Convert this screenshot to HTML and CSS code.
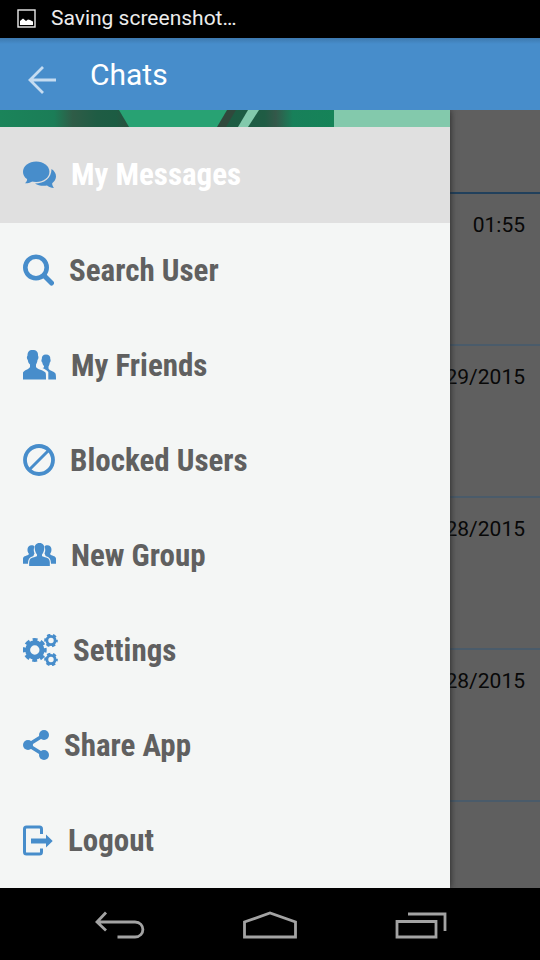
FILE: index.html
```html
<!DOCTYPE html>
<html lang="en">
<head>
<meta charset="utf-8">
<meta name="viewport" content="width=device-width, initial-scale=1">
<title>Chats</title>
<link rel="stylesheet" href="styles.css">
</head>
<body>
<div class="status">
  <svg width="19" height="19" viewBox="0 0 19 19"><rect x="1" y="1" width="17" height="17" fill="none" stroke="#ececec" stroke-width="1.4"/><path d="M3 16V12L6 9.500L9 12L11 10.500L13 11L16 12.500V16Z" fill="#fff"/></svg>
  <span>Saving screenshot…</span>
</div>
<header class="appbar">
  <button class="back" aria-label="Back"><svg width="28" height="28" viewBox="0 0 28 28" fill="none" stroke="#c5dcf1" stroke-width="2.8"><path d="M15 1L2 14L15 27M2 14H28"/></svg></button>
  <h1>Chats</h1>
</header>
<main class="content">
  <section class="chats">
    <div class="chats-head"></div>
    <div class="chat"><time>01:55</time></div>
    <div class="chat"><time>29/2015</time></div>
    <div class="chat"><time>28/2015</time></div>
    <div class="chat"><time>28/2015</time></div>
  </section>
  <nav class="drawer">
    <svg class="cover" viewBox="0 0 450 17" preserveAspectRatio="none">
      <defs>
        <linearGradient id="left"><stop offset="0" stop-color="#1b845a"/><stop offset=".4" stop-color="#1b7d57"/><stop offset=".54" stop-color="#2f5c47"/><stop offset=".72" stop-color="#1f5c44"/><stop offset=".86" stop-color="#1c5c43"/><stop offset="1" stop-color="#34493c"/></linearGradient>
        <linearGradient id="right"><stop offset="0" stop-color="#1c5c43"/><stop offset=".36" stop-color="#1f5c44"/><stop offset=".46" stop-color="#34584a"/><stop offset=".62" stop-color="#18805a"/><stop offset="1" stop-color="#158358"/></linearGradient>
      </defs>
      <path d="M0 0H135V17H0Z" fill="url(#left)"/>
      <path d="M119 0H235V17H129Z" fill="#28a273"/>
      <path d="M227 0H250V17H217Z" fill="#30493c"/>
      <path d="M236 0H334V17H226Z" fill="url(#right)"/>
      <path d="M248 0H259L248 17H238Z" fill="#83c9ac"/>
      <path d="M334 0H450V17H334Z" fill="#83c9ac"/>
    </svg>
    <a class="item active" href="#messages">
      <svg width="33" height="28" viewBox="0 0 33 28"><path d="M28.500 8C31.500 10 33 12.500 33 15.500C33 18 31.500 20.500 29.200 22.200C29 24 30 25.500 31 27C28 27 26 26.200 24 24.600C19 25.300 15 24.500 12 22.500C21 22.500 28.500 17.500 28.500 8Z"/><ellipse cx="13.200" cy="10.700" rx="13.200" ry="10.300"/><path d="M4 16C4.500 19 4 20.500 2 22.300C5.500 22.300 8 21.500 10.500 19.500Z"/></svg>
      <span>My Messages</span></a>
    <a class="item" href="#search">
      <svg width="31" height="32" viewBox="0 0 31 32" fill="none"><circle cx="13" cy="13.500" r="10.700" stroke="#478dcb" stroke-width="4.600"/><path d="M21 21.500L28.500 29" stroke="#478dcb" stroke-width="5" stroke-linecap="round"/></svg>
      <span>Search User</span></a>
    <a class="item" href="#friends">
      <svg width="33" height="30" viewBox="0 0 33 30"><path d="M9.500 0C13.500 0 15.300 2 15 5.500C15.800 7 15.500 9 14.500 10C14.300 12 13.500 13.500 13 14.500V17C14 19.500 20.500 20 22.500 22.500C23 23.500 23 26 23 29.500H0V22.500C1 20 6 19.500 7 17V14.500C5.500 13 5 12 4.800 10C3.800 9 3.500 7 4.500 5.500C4.500 2 6 0 9.500 0Z"/><path d="M23 4.500C26 4.500 27.500 6 27.300 9C28 10 27.500 12 26.800 12.500C26.500 14.500 26 15.500 25.500 16.500V18.500C26.500 21 31 21 32.500 23.500C33 25 33 27 33 29.500H25.300V22C24 20 21.500 19 19.500 18C21 17.500 21 17.500 21 16C20 15 19.500 14 19.300 12.500C18.500 12 18 10 18.800 9C18.800 6 20 4.500 23 4.500Z"/></svg>
      <span>My Friends</span></a>
    <a class="item" href="#blocked">
      <svg width="32" height="32" viewBox="0 0 32 32" fill="none" stroke="#478dcb"><circle cx="16" cy="16" r="14" stroke-width="3.800"/><path d="M6.500 25.500L25.500 6.500" stroke-width="3"/></svg>
      <span>Blocked Users</span></a>
    <a class="item" href="#group">
      <svg width="33" height="24" viewBox="0 0 33 24"><path d="M8.500 2.200C10 2.200 11 2.600 11.500 3.500C10.500 6 10.500 8 11.500 10.500C10.500 12 11 12.500 10 13.200C6 14.500 5.300 16 5 20.700H0V15.500C.5 12.500 4.500 13 6 11C3.500 8 4 2.200 8.500 2.200ZM24.500 2.200C23 2.200 22 2.600 21.500 3.500C22.500 6 22.500 8 21.500 10.500C22.500 12 22 12.500 23 13.200C27 14.500 27.700 16 28 20.700H33V15.500C32.500 12.500 28.500 13 27 11C29.500 8 29 2.200 24.500 2.200Z"/><path d="M16.500 0C20 0 21.700 2.500 21.200 6C20.900 8.500 20 10.200 19 11.500V13C20.500 14.500 26 14.200 26.500 17.500C27 19 26.800 21 26.800 23H6.200C6.200 21 6 19 6.500 17.500C7 14.200 12.500 14.500 14 13V11.500C13 10.200 12.100 8.500 11.800 6C11.300 2.500 13 0 16.500 0Z"/></svg>
      <span>New Group</span></a>
    <a class="item" href="#settings">
      <svg width="35" height="32" viewBox="0 0 35 32" fill="none" stroke="#478dcb"><circle cx="11.800" cy="16" r="7.200" stroke-width="5"/><circle cx="11.800" cy="16" r="10.200" stroke-width="3.400" stroke-dasharray="4.800 3.211" stroke-dashoffset="2.400"/><g stroke-width="2.800"><circle cx="28" cy="6.500" r="4.100"/><circle cx="28" cy="25.500" r="4.100"/></g><g stroke-width="2.600" stroke-dasharray="3.200 2.560" stroke-dashoffset="1.600"><circle cx="28" cy="6.500" r="5.500"/><circle cx="28" cy="25.500" r="5.500"/></g></svg>
      <span>Settings</span></a>
    <a class="item" href="#share">
      <svg width="26" height="30" viewBox="0 0 26 30"><path d="M21 5L5 15L21 25" fill="none" stroke="#478dcb" stroke-width="3.600"/><circle cx="5" cy="15" r="5"/><circle cx="21" cy="5" r="5"/><circle cx="21" cy="25" r="5"/></svg>
      <span>Share App</span></a>
    <a class="item" href="#logout">
      <svg width="30" height="31" viewBox="0 0 30 31"><path d="M18.500 9V4Q18.500 2 16.500 2H3.500Q1.500 2 1.500 4V27Q1.500 29 3.500 29H16.500Q18.500 29 18.500 27V23.500" fill="none" stroke="#478dcb" stroke-width="3"/><path d="M8 13.500H23V9.500L29.700 16L23 22.500V18.500H8Z"/></svg>
      <span>Logout</span></a>
  </nav>
</main>
<footer class="navbar">
  <button aria-label="Back"><svg width="50" height="30" viewBox="0 0 50 30" fill="none" stroke="#a3a3a3" stroke-width="2.800"><path d="M11 1.500L2 11L11 19.500M2 11H40C50.500 11 50.500 26 40 26H22.500"/></svg></button>
  <button aria-label="Home"><svg width="56" height="30" viewBox="0 0 56 30" fill="none" stroke="#a3a3a3" stroke-width="2.800"><path d="M2.500 26V11L28 2L53.500 11V26Z"/></svg></button>
  <button aria-label="Recent apps"><svg width="52" height="30" viewBox="0 0 52 30" fill="none" stroke="#a3a3a3" stroke-width="2.800"><path d="M2 10.500H41V26H2ZM13 3H50V20"/></svg></button>
</footer>
</body>
</html>
```
FILE: styles.css
```css
* {
  box-sizing: border-box;
}

body {
  margin: 0;
  min-height: 100vh;
  display: flex;
  flex-direction: column;
  background: #000;
  font-family: Roboto, "Liberation Sans", sans-serif;
}

button {
  display: flex;
  padding: 0;
  border: 0;
  background: none;
}

.status {
  display: flex;
  align-items: center;
  gap: 15px;
  height: 38px;
  padding: 0 17px 2px;
  color: #ececec;
  font-size: 21px;
}

.appbar {
  display: flex;
  align-items: center;
  gap: 34px;
  height: 72px;
  padding: 0 28px;
  background: linear-gradient(#3d79af, #478dcb 6px);
  color: #fff;
}

.back {
  padding-top: 12px;
}

.appbar h1 {
  margin: 0;
  font-size: 30px;
  font-weight: 400;
}

.content {
  flex: 1;
  display: grid;
  grid-template-columns: 1fr 90px;
  overflow: hidden;
}

.chats {
  grid-area: 1 / 1 / 2 / 3;
  background: #5f5f5f;
}

.chats-head {
  height: 84px;
  border-bottom: 2px solid #21405c;
}

.chat {
  height: 152px;
  padding: 18px 15px;
  border-bottom: 2px solid #4a5b6a;
  color: #080808;
  font-size: 21px;
  line-height: 26px;
  text-align: right;
}

.drawer {
  grid-area: 1 / 1 / 2 / 2;
  z-index: 1;
  background: #f4f6f5;
  box-shadow: 0 0 7px #222;
}

.cover {
  display: block;
  width: 100%;
  height: 17px;
}

.item {
  display: flex;
  align-items: center;
  gap: 15px;
  height: 95px;
  padding: 0 23px 1px;
  color: #606060;
  font-family: "Roboto Condensed", "Liberation Sans Narrow", "Liberation Sans", sans-serif;
  font-size: 31px;
  font-weight: 700;
  text-decoration: none;
}

.item svg {
  fill: #478dcb;
}

.item svg[fill="none"] {
  fill: none;
}

.item.active {
  height: 96px;
  background: #e0e0e0;
  color: #fff;
}

.navbar {
  display: flex;
  align-items: center;
  justify-content: space-between;
  height: 72px;
  padding: 4px 93px 0 95px;
}
```
